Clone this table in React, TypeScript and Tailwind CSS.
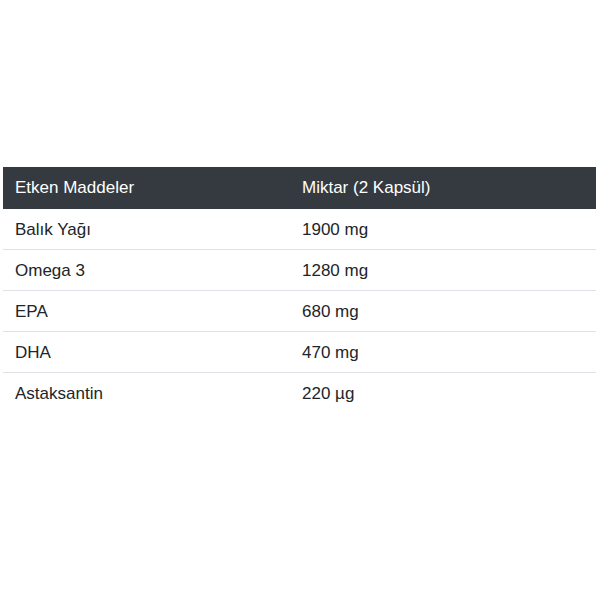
const rows = [
  ["Balık Yağı", "1900 mg"],
  ["Omega 3", "1280 mg"],
  ["EPA", "680 mg"],
  ["DHA", "470 mg"],
  ["Astaksantin", "220 µg"],
];

export default function App() {
  return (
    <div className="min-h-[600px] w-[600px] bg-white pt-[167px] font-['Liberation_Sans',Arial,sans-serif]">
      <table className="ml-[3px] w-[593px] border-collapse text-[17px] text-[#212529]">
        <thead>
          <tr className="bg-[#343a40] text-white">
            <th className="w-[287px] px-3 py-2 text-left font-normal leading-[26px]">Etken Maddeler</th>
            <th className="px-3 py-2 text-left font-normal leading-[26px]">Miktar (2 Kapsül)</th>
          </tr>
        </thead>
        <tbody>
          {rows.map(([name, amount], i) => (
            <tr key={name} className={i > 0 ? "border-t border-[#dee2e6]" : ""}>
              <td className="px-3 pt-[9px] pb-[7px] leading-[24px]">{name}</td>
              <td className="px-3 pt-[9px] pb-[7px] leading-[24px]">{amount}</td>
            </tr>
          ))}
        </tbody>
      </table>
    </div>
  );
}
